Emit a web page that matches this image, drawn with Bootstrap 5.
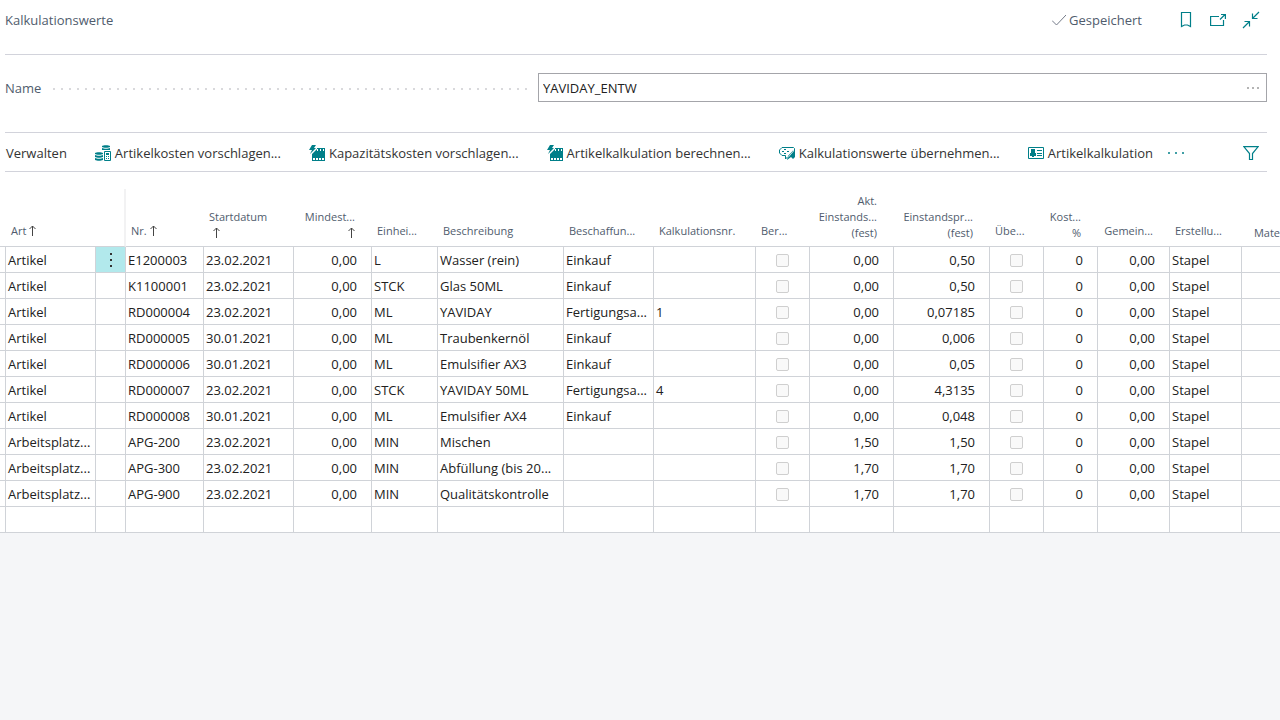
<!DOCTYPE html>
<html lang="de">
<head>
<meta charset="utf-8">
<meta name="viewport" content="width=device-width, initial-scale=1">
<title>Kalkulationswerte</title>
<link href="https://cdn.jsdelivr.net/npm/bootstrap@5.3.0/dist/css/bootstrap.min.css" rel="stylesheet">
<style>
:root { --teal: #007f89; --line: #d2d3db; --label: #505c6d; --ink: #212121; }
body { font-family: "Open Sans", "Noto Sans", sans-serif; font-size: 13px; line-height: 20px; color: var(--ink); background: #f5f6f8; }
svg { display: block; flex: none; }
button { font: inherit; color: inherit; background: none; border: 0; padding: 0; }
.page-inset { padding-left: 5px; padding-right: 13px; }
.title-bar { height: 55px; padding: 0 7px 15px 0; border-bottom: 1px solid var(--line); }
.title-bar h1 { font-size: 13px; line-height: 20px; font-weight: 400; }
.soft { color: var(--label); }
.saved { gap: 3px; }
.title-icons { gap: 16px; margin-left: 36px; color: var(--teal); }
.name-row { display: grid; grid-template-columns: 533fr 729fr; padding: 18px 0 30px; border-bottom: 1px solid var(--line); }
.dots { height: 2px; margin: 2px 10px 0 12px; background: repeating-linear-gradient(90deg, #d9d9dc 0 2px, transparent 2px 8px); }
.name-box { height: 29px; border: 1px solid #a4a5aa; }
.name-box input { border: 0; padding: 0 4px; font-size: 13px; color: var(--ink); background: none; outline: 0; min-width: 0; }
.name-box button { width: 26px; }
.action-bar { height: 39px; padding: 2px 8px 0 1px; border-bottom: 1px solid var(--line); color: #333; }
.action-bar nav { gap: 28px; }
.action { gap: 4px; white-space: nowrap; }
.action svg, .teal { color: var(--teal); }
.more { margin-left: 15px; }
.grid-wrap { padding-top: 17px; }
.values { table-layout: fixed; width: 100%; border-collapse: separate; border-spacing: 0; }
.values th { height: 58px; padding: 0 5px 7px; vertical-align: bottom; font-size: 11px; line-height: 16px; font-weight: 400; color: var(--label); border-bottom: 1px solid #d0d3d8; white-space: nowrap; }
.values td { height: 26px; padding: 1px 2px 0; line-height: 24px; border-right: 1px solid #d0d3d8; border-bottom: 1px solid #d0d3d8; white-space: nowrap; overflow: hidden; }
.values td.num { text-align: right; padding-right: 14px; }
.values th.num { text-align: right; padding-right: 17px; }
.values th.stacked { padding-bottom: 5px; }
.values th:last-child { padding-right: 0; }
.values td:last-child { border-right: 0; }
.values th.split-end { border-right: 2px solid #f2f2f3; }
.values td.chosen { background: #b2e9ec; padding: 0; }
.values td.chosen button { display: flex; width: 100%; height: 25px; align-items: center; justify-content: center; }
.values th svg { display: inline-block; vertical-align: -1px; }
.values input { appearance: none; display: block; width: 13px; height: 13px; margin: 0 auto; border: 1px solid #cfcfcf; border-radius: 2px; background: #f9f9f9; }
</style>
</head>
<body>
<svg class="d-none" aria-hidden="true">
  <symbol id="up" viewBox="0 0 7 11"><path d="M3.500 11V1M.5 4l3-3 3 3" fill="none" stroke="#444"/></symbol>
  <symbol id="batch" viewBox="0 0 16 16"><path d="M3 0h4L5 3h2L1 9l2-4H0z" fill="currentColor"/><path d="M8 3h8v13H3V9l5-5z" fill="currentColor"/><path d="M8 4h1v2H8zM11 4h1v2h-1zM14 4h1v2h-1zM4 13h2v2H4zM7 13h2v2H7zM10 13h2v2h-2zM13 13h2v2h-2z" fill="#fff"/></symbol>
</svg>
<main class="bg-white overflow-hidden">
  <div class="page-inset">
    <header class="title-bar d-flex align-items-center soft">
      <h1 class="m-0 me-auto">Kalkulationswerte</h1>
      <span class="saved d-flex align-items-center">
        <svg width="14" height="12" viewBox="0 0 14 12" fill="none" stroke="#747b89"><path d="M0 6.500l4.500 4.500L14 1"/></svg>Gespeichert</span>
      <div class="title-icons d-flex align-items-center">
        <button type="button" aria-label="Lesezeichen"><svg width="16" height="17" viewBox="0 0 16 17" fill="none" stroke="currentColor" stroke-width="1.200"><path d="M3.500 1.500h9v14l-3-1.500h-3l-3 1.500z"/></svg></button>
        <button type="button" aria-label="In neuem Fenster öffnen"><svg width="16" height="16" viewBox="0 0 16 16" fill="none" stroke="currentColor" stroke-width="1.200"><path d="M9 4.500H.6v9h12.900V8M10 7.500l5-5M11 2.500h4.400v4.400"/></svg></button>
        <button type="button" aria-label="Verkleinern"><svg width="18" height="18" viewBox="0 0 18 18" fill="none" stroke="currentColor" stroke-width="1.200"><path d="M17 1l-6.500 6.500M10.500 2.500v5h5M1 17l6.500-6.500M2.500 10.500h5v5"/></svg></button>
      </div>
    </header>
    <div class="name-row">
      <div class="d-flex align-items-center soft">
        <label for="batchName">Name</label><span class="dots flex-grow-1"></span>
      </div>
      <div class="name-box d-flex align-items-center">
        <input id="batchName" class="flex-grow-1" type="text" value="YAVIDAY_ENTW">
        <button type="button" aria-label="Wert auswählen"><svg class="mx-auto" width="12" height="3" viewBox="0 0 12 3" fill="#555"><circle cx="1" cy="2" r=".8"/><circle cx="6" cy="2" r=".8"/><circle cx="11" cy="2" r=".8"/></svg></button>
      </div>
    </div>
    <div class="action-bar d-flex align-items-center">
      <nav class="d-flex align-items-center" aria-label="Aktionen">
        <button type="button" class="action">Verwalten</button>
        <button type="button" class="action d-flex align-items-center"><svg width="16" height="16" viewBox="0 0 16 16" fill="currentColor"><path d="M7 1c1-1 7-1 8 0v1c-1 1-7 1-8 0zM7 3c2 1 6 1 8 0v2H7zM0 8c1-1 7-1 8 0v1c-1 1-7 1-8 0zM0 10c2 1 6 1 8 0v2c-2 1-6 1-8 0zM0 13c2 1 6 1 8 0v2c-2 1-6 1-8 0z"/><path d="M9.500 6.500h6v9h-6z" fill="#fff" stroke="currentColor"/><path d="M11 8h3v2h-3zM11 11h1v1h-1zM13 11h1v1h-1zM11 13h1v1h-1zM13 13h1v1h-1z"/></svg>Artikelkosten vorschlagen...</button>
        <button type="button" class="action d-flex align-items-center"><svg width="16" height="16"><use href="#batch"/></svg>Kapazitätskosten vorschlagen...</button>
        <button type="button" class="action d-flex align-items-center"><svg width="16" height="16"><use href="#batch"/></svg>Artikelkalkulation berechnen...</button>
        <button type="button" class="action d-flex align-items-center"><svg width="16" height="16" viewBox="0 0 16 16" fill="none" stroke="currentColor"><path d="M15.500 7V3.500l-1-1H3L.5 5v3L3 10.500h3.500V14l2-2"/><path d="M3 6h2v1H3zM5 4h2v1H5zM5 8h2v1H5zM8 6h2v1H8z" fill="currentColor" stroke="none"/><path d="M14 5.500l2 1.500v5l-2 2-2-2-4 3 1-4z" fill="currentColor" stroke="none"/><path d="M14.500 6L9 12.500" stroke="#fff" stroke-width=".8"/></svg>Kalkulationswerte übernehmen...</button>
        <button type="button" class="action d-flex align-items-center"><svg width="16" height="16" viewBox="0 0 16 16"><path d="M.5 2.500h15v11H.5z" fill="none" stroke="currentColor"/><path d="M3 4h4v4h1v3H6v1H4v-1H2V8h1zM9 5h5v1H9zM9 8h5v1H9zM9 10h5v1H9z" fill="currentColor"/></svg>Artikelkalkulation</button>
      </nav>
      <button type="button" class="teal more me-auto" aria-label="Weitere Optionen"><svg width="16" height="3" viewBox="0 0 16 3" fill="currentColor"><circle cx="1" cy="1" r="1"/><circle cx="8" cy="1" r="1"/><circle cx="15" cy="1" r="1"/></svg></button>
      <button type="button" class="teal" aria-label="Filter"><svg width="16" height="16" viewBox="0 0 16 16" fill="none" stroke="currentColor" stroke-width="1.200"><path d="M.8 1.600h14.400L9.500 8.500v6h-3v-6z"/></svg></button>
    </div>
  </div>
  <div class="grid-wrap">
    <table class="values">
      <colgroup id="cols"></colgroup>
      <thead><tr>
        <th></th>
        <th scope="col">Art <svg width="7" height="11"><use href="#up"/></svg></th>
        <th class="split-end"></th>
        <th scope="col">Nr. <svg width="7" height="11"><use href="#up"/></svg></th>
        <th scope="col" class="stacked">Startdatum<br><svg class="ms-1" width="7" height="11"><use href="#up"/></svg></th>
        <th scope="col" class="num stacked">Mindest...<br><svg width="7" height="11"><use href="#up"/></svg></th>
        <th scope="col">Einhei...</th>
        <th scope="col">Beschreibung</th>
        <th scope="col">Beschaffun...</th>
        <th scope="col">Kalkulationsnr.</th>
        <th scope="col">Ber...</th>
        <th scope="col" class="num stacked">Akt.<br>Einstands...<br>(fest)</th>
        <th scope="col" class="num stacked">Einstandspr...<br>(fest)</th>
        <th scope="col">Übe...</th>
        <th scope="col" class="num stacked">Kost...<br>%</th>
        <th scope="col" class="num">Gemein...</th>
        <th scope="col">Erstellu...</th>
        <th scope="col" class="num stacked">Mate</th>
      </tr></thead>
      <tbody id="rows"></tbody>
    </table>
  </div>
</main>
<script>
// Column widths; the last column takes whatever the window leaves.
const widths = [6, 90, 30, 78, 90, 78, 66, 126, 90, 102, 54, 84, 96, 54, 54, 72, 72, 0];
document.getElementById('cols').innerHTML = widths.map(w => w ? `<col style="width:${w}px">` : '<col>').join('');
const data = [
  ['Artikel', 'E1200003', '23.02.2021', 'L', 'Wasser (rein)', 'Einkauf', '', '0,00', '0,50'],
  ['Artikel', 'K1100001', '23.02.2021', 'STCK', 'Glas 50ML', 'Einkauf', '', '0,00', '0,50'],
  ['Artikel', 'RD000004', '23.02.2021', 'ML', 'YAVIDAY', 'Fertigungsa...', '1', '0,00', '0,07185'],
  ['Artikel', 'RD000005', '30.01.2021', 'ML', 'Traubenkernöl', 'Einkauf', '', '0,00', '0,006'],
  ['Artikel', 'RD000006', '30.01.2021', 'ML', 'Emulsifier AX3', 'Einkauf', '', '0,00', '0,05'],
  ['Artikel', 'RD000007', '23.02.2021', 'STCK', 'YAVIDAY 50ML', 'Fertigungsa...', '4', '0,00', '4,3135'],
  ['Artikel', 'RD000008', '30.01.2021', 'ML', 'Emulsifier AX4', 'Einkauf', '', '0,00', '0,048'],
  ['Arbeitsplatz...', 'APG-200', '23.02.2021', 'MIN', 'Mischen', '', '', '1,50', '1,50'],
  ['Arbeitsplatz...', 'APG-300', '23.02.2021', 'MIN', 'Abfüllung (bis 20...', '', '', '1,70', '1,70'],
  ['Arbeitsplatz...', 'APG-900', '23.02.2021', 'MIN', 'Qualitätskontrolle', '', '', '1,70', '1,70']
];
const cell = t => `<td>${t}</td>`;
const num = t => `<td class="num">${t}</td>`;
const tick = name => `<td><input type="checkbox" disabled aria-label="${name}"></td>`;
const menu = '<td class="chosen"><button type="button" aria-label="Zeilenmenü"><svg width="2" height="14" viewBox="0 0 2 14" fill="#333"><path d="M0 0h2v2H0zM0 6h2v2H0zM0 12h2v2H0z"/></svg></button></td>';
document.getElementById('rows').innerHTML = data.map((r, i) => '<tr>' + cell('') + cell(r[0]) + (i ? cell('') : menu) +
  cell(r[1]) + cell(r[2]) + num('0,00') + cell(r[3]) + cell(r[4]) + cell(r[5]) + cell(r[6]) + tick('Berechnen') +
  num(r[7]) + num(r[8]) + tick('Übernehmen') + num('0') + num('0,00') + cell('Stapel') + cell('') + '</tr>').join('') +
  '<tr>' + widths.map(() => cell('')).join('') + '</tr>';
</script>
<script src="https://cdn.jsdelivr.net/npm/bootstrap@5.3.0/dist/js/bootstrap.bundle.min.js"></script>
</body>
</html>
